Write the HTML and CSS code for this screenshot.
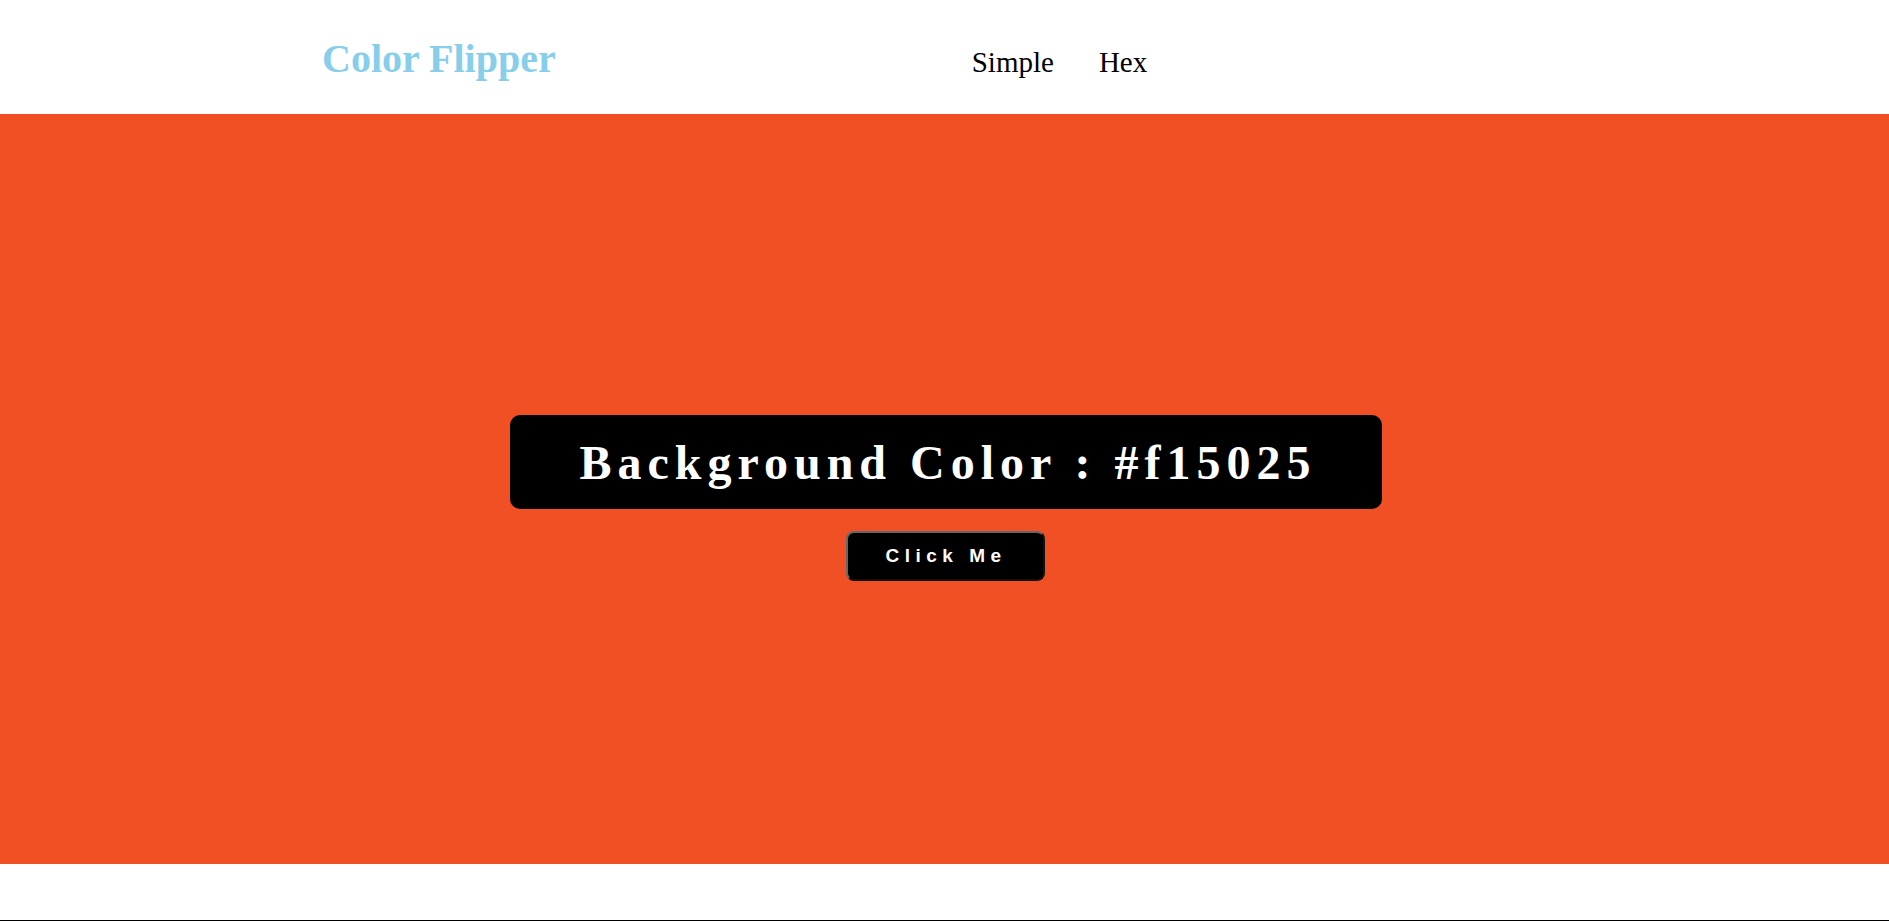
FILE: index.html
```html
<!DOCTYPE html>
<html>
<head>
<meta charset="utf-8">
<title>Color Flipper</title>
<link rel="stylesheet" href="styles.css">
</head>
<body>
<header class="topbar">
  <h1 class="brand">Color Flipper</h1>
  <nav class="nav">
    <a class="nav-link" href="#">Simple</a>
    <a class="nav-link" href="#">Hex</a>
  </nav>
</header>
<main class="stage">
  <div class="stage-inner">
    <h2 class="color-label">Background Color : #f15025</h2>
    <button class="flip-btn">Click Me</button>
  </div>
</main>
<div class="spacer"></div>
<footer class="footer"></footer>
</body>
</html>
```
FILE: styles.css
```css
html, body {
  margin: 0;
  padding: 0;
  background: #ffffff;
}
body {
  font-family: "Liberation Serif", "Times New Roman", serif;
}
.topbar {
  height: 114px;
  display: flex;
  align-items: baseline;
  box-sizing: border-box;
  padding-top: 35px;
}
.brand {
  margin: 0 0 0 322px;
  font-size: 40px;
  font-weight: bold;
  color: #87ceeb;
  line-height: 1.2;
}
.nav {
  margin-left: 416px;
  display: flex;
  gap: 45px;
}
.nav-link {
  font-size: 29px;
  color: #000;
  text-decoration: none;
}
.stage {
  height: 750px;
  background: #f15025;
  display: flex;
  align-items: center;
  justify-content: center;
}
.stage-inner {
  display: flex;
  flex-direction: column;
  align-items: center;
  padding-top: 18px;
  padding-left: 3px;
}
.color-label {
  margin: 0;
  background: #000;
  color: #fff;
  border-radius: 10px;
  font-size: 48px;
  font-weight: bold;
  letter-spacing: 6px;
  height: 94px;
  line-height: 96px;
  padding: 0 66px 0 70px;
  box-sizing: border-box;
}
.flip-btn {
  margin-top: 22px;
  width: 199px;
  height: 50px;
  background: #000;
  color: #fff;
  border: 2px outset #666;
  border-radius: 8px;
  font-family: "Liberation Sans", Arial, sans-serif;
  font-weight: bold;
  font-size: 19px;
  letter-spacing: 5.5px;
  padding: 0 0 0 0;
}
.spacer {
  height: 56px;
}
.footer {
  border-top: 1px solid #000;
  height: 40px;
}
```
